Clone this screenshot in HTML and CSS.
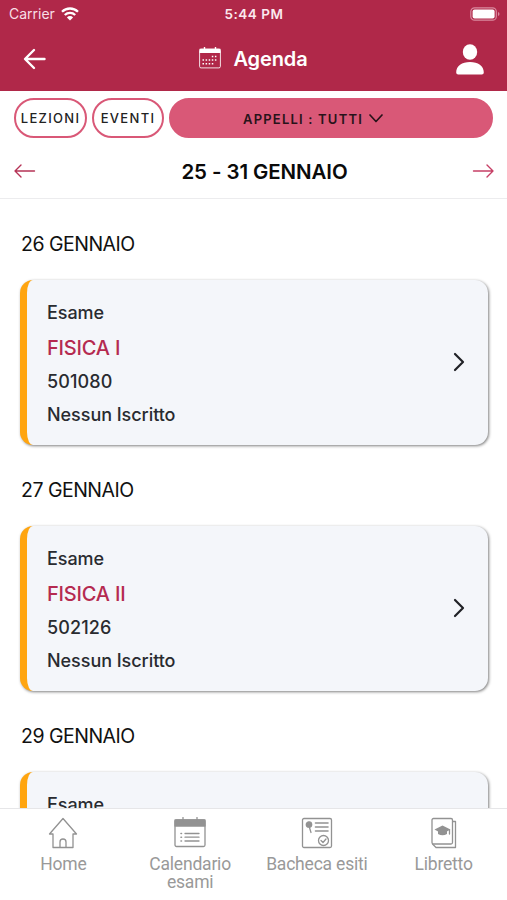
FILE: index.html
```html
<!DOCTYPE html>
<html lang="it">
<head>
<meta charset="utf-8">
<title>Agenda</title>
<link rel="stylesheet" href="styles.css">
</head>
<body>
<div class="app">
  <header class="header">
    <div class="status">
      <div class="carrier"><span>Carrier</span>
        <svg width="18" height="14" viewBox="0 0 18 14" fill="none" stroke="#fff" stroke-width="2.3"><path d="M1 4.8a11.4 11.4 0 0 1 16 0M3.8 8a7.4 7.4 0 0 1 10.4 0"/><path d="M9 13.6 5.9 10.400a4.400 4.400 0 0 1 6.200 0z" fill="#fff" stroke="none"/></svg>
      </div>
      <time class="clock">5:44 PM</time>
      <svg class="battery" width="31" height="14" viewBox="0 0 31 14"><rect x=".8" y=".8" width="25.500" height="12.400" rx="3.800" fill="none" stroke="#d98a9f" stroke-width="1.200"/><rect x="2.600" y="2.600" width="22" height="8.800" rx="2" fill="#fff"/><path d="M28 5c2 .7 2 3.300 0 4z" fill="#d98a9f"/></svg>
    </div>
    <div class="navbar">
      <svg class="back" width="24" height="22" viewBox="0 0 24 22" fill="none" stroke="#fff" stroke-width="2.400" stroke-linecap="round" stroke-linejoin="round"><path d="M21.500 11H2.500M11 2l-9 9 9 9"/></svg>
      <div class="title">
        <svg width="22" height="22" viewBox="0 0 22 22"><rect x=".6" y="2.100" width="20.800" height="18.800" rx="1.500" fill="none" stroke="#fff" stroke-opacity=".85"/><path d="M.5 1.800h21V6H.5z" fill="#fff"/><path d="M5.500 0v3M16.500 0v3" stroke="#fff" stroke-width="1.400"/><path d="M12.800 9.500h6M3.500 13h15M3.500 16.700h12" stroke="#fff" stroke-width="1.500" stroke-dasharray="1.500 1.600"/></svg>
        <h1>Agenda</h1>
      </div>
      <svg class="user" width="28" height="31" viewBox="0 0 28 31" fill="#fff"><ellipse cx="14" cy="8" rx="7.200" ry="7.800"/><path d="M.2 28.500C.2 22 6 18 14 18s13.800 4 13.800 10.500q0 2-2 2H2.200q-2 0-2-2z"/></svg>
    </div>
  </header>
  <div class="filters">
    <button class="pill lezioni">LEZIONI</button>
    <button class="pill eventi">EVENTI</button>
    <button class="pill appelli"><span>APPELLI : TUTTI</span><svg width="14" height="9" viewBox="0 0 14 9" fill="none" stroke="#28131a" stroke-width="1.700" stroke-linecap="round" stroke-linejoin="round"><path d="m1 1 6 6.500L13 1"/></svg></button>
  </div>
  <div class="week">
    <svg width="22" height="14" viewBox="0 0 22 14" fill="none" stroke="#b53356" stroke-width="1.400" stroke-linecap="round" stroke-linejoin="round"><path d="M20.500 7H1M7 1 1 7l6 6"/></svg>
    <h2>25 - 31 GENNAIO</h2>
    <svg width="22" height="14" viewBox="0 0 22 14" fill="none" stroke="#c63f65" stroke-width="1.400" stroke-linecap="round" stroke-linejoin="round"><path d="M1.500 7H21M15 1l6 6-6 6"/></svg>
  </div>
  <main class="list">
    <section class="day">
      <h3>26 GENNAIO</h3>
      <article class="card">
        <div class="info"><p>Esame</p><p class="subject">FISICA I</p><p>501080</p><p>Nessun Iscritto</p></div>
        <svg width="12" height="20" viewBox="0 0 12 20" class="chevron"><path d="m2 2 8 8-8 8"/></svg>
      </article>
    </section>
    <section class="day">
      <h3>27 GENNAIO</h3>
      <article class="card">
        <div class="info"><p>Esame</p><p class="subject">FISICA II</p><p>502126</p><p>Nessun Iscritto</p></div>
        <svg width="12" height="20" viewBox="0 0 12 20" class="chevron"><path d="m2 2 8 8-8 8"/></svg>
      </article>
    </section>
    <section class="day">
      <h3>29 GENNAIO</h3>
      <article class="card"><div class="info"><p>Esame</p></div></article>
    </section>
  </main>
  <nav class="tabs">
    <a class="tab"><svg width="32" height="32" viewBox="0 0 32 32"><path d="M6 30.500V17H2.500L16 1.500 29.500 17H26v13.500zM13 30.500V25a3 3 0 0 1 6 0v5.500"/></svg><span>Home</span></a>
    <a class="tab"><svg width="32" height="32" viewBox="0 0 32 32"><rect x="1" y="3" width="30" height="26.500" rx="1.500"/><path class="solid" d="M1 3h30v6H1z"/><path d="M9 .500v4M23 .500v4M11 16.500h14M11 20.200h14M11 24h14"/><path d="M7 16.500h.5M7 20.200h.5M7 24h.5" stroke-width="1.600"/></svg><span>Calendario esami</span></a>
    <a class="tab"><svg width="32" height="32" viewBox="0 0 32 32"><rect x="1.500" y="1.500" width="29" height="29" rx="1.500"/><circle class="solid" cx="8" cy="7.500" r="2.700"/><path d="m8 9 2 6.500"/><path d="M14.500 6H27M14.500 10H27M14.500 14H27" stroke-width="1.600"/><circle cx="22.500" cy="23.500" r="5"/><path d="m20 23.500 2 2 3-3.500"/></svg><span>Bacheca esiti</span></a>
    <a class="tab"><svg width="32" height="32" viewBox="0 0 32 32"><rect x="4" y="1.500" width="20.500" height="25.500" rx="1.500"/><path d="M25 4.500h2.500v26H8L4.500 27"/><path class="faculty" d="m14.500 8.500 8 4-8 4.500-8-4.500z"/><path class="faculty" d="M10 14v3q4.500 2.500 9 0v-3z"/><path d="M21.500 13v4"/></svg><span>Libretto</span></a>
  </nav>
</div>
</body>
</html>
```
FILE: styles.css
```css
* { box-sizing: border-box; }
body, h1, h2, h3, p { margin: 0; }
body { background: #fff; color: #111; font-family: Inter, "Liberation Sans", sans-serif; }
svg { display: block; flex: none; }
.app { width: 507px; height: 900px; display: flex; flex-direction: column; overflow: hidden; }

.header { height: 91px; flex: none; background: #b02849; color: #fff; }
.status { height: 27px; padding: 0 6px 0 9px; display: grid; grid-template-columns: 1fr auto 1fr; align-items: center; }
.carrier { display: flex; align-items: center; gap: 6px; font-size: 14px; color: #f8dfe6; }
.clock { font-size: 13.500px; font-weight: 600; letter-spacing: .5px; color: #fbe9ee; transform: translateX(-1px); }
.battery { justify-self: end; }
.navbar { height: 64px; padding: 0 23px; display: grid; grid-template-columns: 1fr auto 1fr; align-items: center; }
.back { margin-top: -1px; }
.user { justify-self: end; }
.title { display: flex; align-items: center; gap: 12px; }
.title svg { margin-top: -3px; }
h1 { font-size: 20px; line-height: 28px; font-weight: 600; letter-spacing: -.1px; }

.filters { height: 47px; flex: none; padding: 7px 14px 0; display: flex; gap: 5px; }
.pill { height: 40px; padding: 0; border: 2px solid #d95877; border-radius: 20px; background: #fff; color: #222; font-family: inherit; font-size: 13px; font-weight: 500; letter-spacing: 1.3px; white-space: nowrap; }
.lezioni { width: 73px; }
.eventi { width: 72px; }
.appelli { flex: 1; display: flex; justify-content: center; align-items: center; gap: 6px; padding: 1px 36px 0 0; background: #d95877; color: #28131a; font-weight: 600; letter-spacing: 1.200px; }

.week { height: 61px; flex: none; border-bottom: 1px solid #ececee; padding: 21px 13px 0 14px; display: flex; justify-content: space-between; align-items: flex-start; }
.week svg { margin-top: 5px; }
h2 { padding-left: 21px; color: #0a0a0a; font-size: 20.500px; line-height: 26px; font-weight: 600; letter-spacing: -.1px; }

.list { flex: 1; min-height: 0; overflow: hidden; padding: 32px 19px 0 20px; }
.day { height: 246px; }
h3 { padding-left: 1px; font-size: 19.500px; line-height: 26px; font-weight: 400; letter-spacing: -.5px; }
.card { height: 165px; margin-top: 23px; padding: 19px 23px 0 20px; display: flex; justify-content: space-between; border-left: 6px solid #ffa510; border-left-width: 7px; border-radius: 13px; background: #f4f6fa; box-shadow: 1px 1px 3px rgba(0, 0, 0, .5); color: #292b30; }
.info { font-size: 18px; line-height: 28px; font-weight: 500; letter-spacing: -.05px; }
.info p + p { margin-top: 5px; }
.info .subject { margin-top: 7px; color: #b52a50; font-size: 20px; letter-spacing: -.2px; }
.info .subject + p { margin-top: 6px; letter-spacing: .1px; }
.chevron { margin-top: 53px; fill: none; stroke: #202126; stroke-width: 2.200; stroke-linecap: round; stroke-linejoin: round; }

.tabs { height: 92px; flex: none; border-top: 1px solid #e6e6e8; background: #fff; display: grid; grid-template-columns: repeat(4, 1fr); padding-top: 8px; }
.tab { display: flex; flex-direction: column; align-items: center; gap: 6px; color: #999; font-family: Roboto, sans-serif; font-size: 17.500px; line-height: 18px; letter-spacing: -.2px; text-align: center; }
.tab svg { fill: none; stroke: #929292; stroke-width: 1.300; stroke-linejoin: round; stroke-linecap: round; }
.tab .solid, .tab .faculty { fill: #929292; }
.tab .faculty { stroke: none; }
.tab span { max-width: 110px; }
```
